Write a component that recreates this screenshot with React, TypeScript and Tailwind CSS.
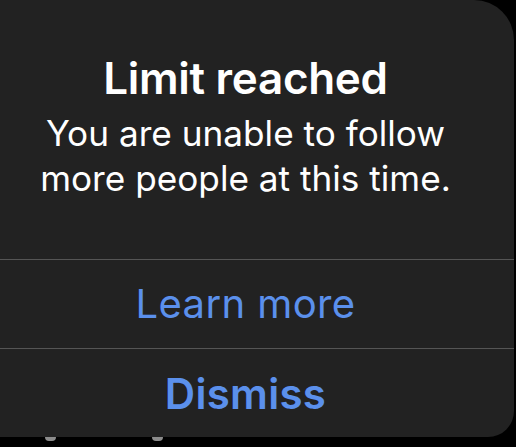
import React from "react"

const font = { fontFamily: "Inter, 'Noto Sans', sans-serif" }

type Action = { label: string; bold?: boolean }

const actions: Action[] = [{ label: "Learn more" }, { label: "Dismiss", bold: true }]

export default function App() {
  return (
    <div className="flex h-[447px] w-[516px] flex-col overflow-hidden bg-black" style={font}>
      <div className="ml-[-23px] flex h-[437px] w-[537px] shrink-0 flex-col rounded-tr-[40px] rounded-br-[26px] bg-[#222222]">
        {/* message */}
        <div className="flex h-[260px] flex-col items-center pt-[52px] text-center text-white">
          <h1 className="text-[44px] font-semibold leading-[52px] tracking-[-0.3px]">Limit reached</h1>
          <p className="mt-[7px] text-[35.2px] leading-[45px]">
            You are unable to follow
            <br />
            more people at this time.
          </p>
        </div>
        {actions.map((a) => (
          <button
            key={a.label}
            className={`flex h-[89px] items-center justify-center border-t border-[#555555] text-[#5b90ec] ${
              a.bold ? "text-[42px] font-semibold tracking-[0.3px]" : "text-[40px] font-normal tracking-[0.4px]"
            }`}
          >
            {a.label}
          </button>
        ))}
      </div>
      {/* glyph tops of the row underneath, peeking out */}
      <div className="flex gap-[96px] pl-[45px]">
        <span className="h-[4px] w-[11px] rounded-b-full bg-[#8c8c8c]" />
        <span className="h-[4px] w-[11px] rounded-b-full bg-[#8c8c8c]" />
      </div>
    </div>
  )
}
